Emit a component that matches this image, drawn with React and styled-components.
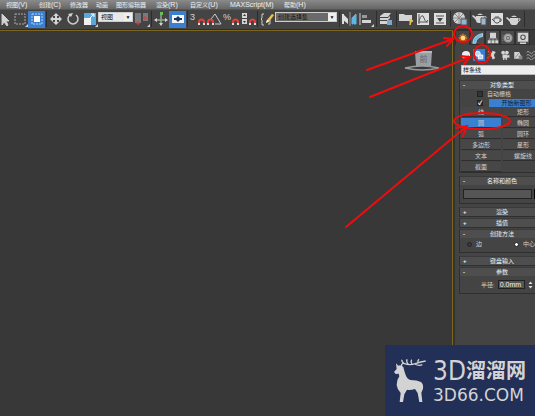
import React, { useState } from 'react';
import styled, { createGlobalStyle } from 'styled-components';

const menus = [
  ['视图', '(V)', 33],
  ['创建', '(C)', 31],
  ['修改器', '', 26],
  ['动画', '', 20],
  ['图形编辑器', '', 40],
  ['渲染', '(R)', 34],
  ['自定义', '(U)', 40],
  ['MAXScript', '(M)', 54],
  ['帮助', '(H)', 30],
];

const shapes = [
  '线', '矩形', '圆', '椭圆', '弧', '圆环',
  '多边形', '星形', '文本', '螺旋线', '截面',
];

const magnet = (
  <g fill='none' strokeWidth='2'>
    <path d='M10 12v-1a2.5 2.5 0 0 1 5 0v1' stroke='#d8453c' />
    <path d='M10 12v2M15 12v2' stroke='#ddd' />
  </g>
);

const teapot = (
  <g>
    <path d='M4 7h8q1 6-2 7H6Q3 13 4 7z' />
    <path d='M5 6q3-3 6 0zM4 11L0 7l1-1 4 3z' />
    <path d='M12 8q3-1 2 1t-3 2' fill='none' stroke='#d4d4d4' />
  </g>
);

const icons = {
  cursor: <path d='M7 3v11l2-3 3 4 1-1-2-4h3zM2 5l3 3M2 8l3 3' stroke='#ccc' />,
  region: (
    <g>
      <path d='M3 3h10v10H3z' fill='none' stroke='#aaa' strokeDasharray='2 1' />
      <path d='M16 13v3h-3z' />
    </g>
  ),
  crossing: (
    <g>
      <path d='M3 3h10v10H3z' fill='none' stroke='#b5d3f4' strokeDasharray='2 1' />
      <path d='M5 5h6v6H5z' fill='#fff' />
    </g>
  ),
  move: (
    <path d='M8 2l3 3H9v2h2V5l3 3-3 3V9H9v2h2l-3 3-3-3h2V9H5v2L2 8l3-3v2h2V5H5z' />
  ),
  rotate: (
    <g>
      <path d='M5 4a5 5 0 1 0 6 0' fill='none' stroke='#ccc' strokeWidth='1.5' />
      <path d='M3 3l5-1-2 4z' />
    </g>
  ),
  scale: (
    <g>
      <path d='M2 2h12v12H2z' fill='#5aa8da' />
      <path d='M2 7h7v7H2z' fill='#f1f1f1' />
      <path d='M7 8l5-5M9 3h3v3' fill='none' stroke='#fff' />
      <path d='M16 13v3h-3z' />
    </g>
  ),
  pivot: (
    <g>
      <path d='M1 2h6v10H1zM9 2h5v8H9z' fill='#777b80' />
      <path d='M2 12h4M4 10v4M9 7h4M11 5v4' stroke='#e23a31' />
      <path d='M16 13v3h-3z' />
    </g>
  ),
  manipulate: (
    <g>
      <path d='M8 2v12M2 9h12' stroke='#ccc' />
      <path d='M7 8h2v2H7zM7 1h3v3H7z' fill='#6cba62' />
      <path d='M4 7L1 9l3 2zM12 7l3 2-3 2zM6 12h4l-2 3z' />
    </g>
  ),
  keyboard: (
    <g>
      <path d='M2 4h12v8H2z' fill='#f4f4f4' />
      <path d='M8 5l2 2h2v2h-2l-2 2-2-2H4V7h2z' fill='#163766' />
    </g>
  ),
  snap: (
    <g>
      <text x='1' y='9' fontSize='9'>3</text>
      {magnet}
    </g>
  ),
  angle: (
    <g>
      <path d='M5 8l4-5 6 10H9' fill='none' stroke='#ccc' />
      <path d='M2 12v-1a2.5 2.5 0 0 1 5 0v1' fill='none' stroke='#d8453c' strokeWidth='2' />
      <path d='M2 12v2M7 12v2' stroke='#ddd' strokeWidth='2' />
    </g>
  ),
  percent: (
    <g>
      <text x='0' y='9' fontSize='9'>%</text>
      {magnet}
    </g>
  ),
  spinner: (
    <g>
      <path d='M2 2h5v5H2zM2 8h5v5H2z' />
      <path d='M3 5l1.5-2L6 5zM3 10l1.5 2L6 10z' fill='#333' />
      {magnet}
    </g>
  ),
  sets: (
    <g>
      <path d='M5 3H3v4L2 8l1 1v5h2M9 13h2V9' fill='none' stroke='#ccc' />
      <path d='M7 12l1-3 5-6 2 1-5 7z' fill='#e8c35a' />
      <path d='M7 12l1-3 2 1z' fill='#fff' />
    </g>
  ),
  mirror: (
    <g>
      <path d='M2 3l5 5v5L2 9z' fill='#ddd' />
      <path d='M2 3v10' stroke='#ddd' strokeWidth='2' />
      <path d='M15 3l-4 4v6h1l1-4v4h2z' fill='#60b7e6' stroke='#60b7e6' />
      <path d='M9 1v14' stroke='#999' />
    </g>
  ),
  align: (
    <g>
      <path d='M2 2v12' stroke='#ccc' />
      <path d='M4 4h5v3H4z' fill='#999' />
      <path d='M4 9h9v3H4z' />
      <path d='M16 13v3h-3z' />
    </g>
  ),
  layers: (
    <g>
      <path d='M2 5l4-3h7l-3 4H2zM2 7h8l2-2v2l-2 2H2zM2 10h7v3H2z' />
      <path d='M9 9h5v5H9z' fill='#82a5c6' />
    </g>
  ),
  ribbon: (
    <g>
      <path d='M1 3h5l1 1h7v6H1z' />
      <path d='M12 14V8l3 2-2 1z' fill='#e8c35a' stroke='#e8c35a' />
    </g>
  ),
  curve: (
    <g>
      <path d='M2 2h12v12H2z' fill='#ddd' />
      <path d='M4 3v10M3 11h10M4 10q3-9 5-3t4 2' fill='none' stroke='#555' />
    </g>
  ),
  schematic: (
    <g>
      <path d='M2 2h12v12H2z' fill='#ddd' />
      <path d='M4 5h8M4 12h8' stroke='#555' />
      <path d='M5 7h6l-3 4z' fill='#444' />
    </g>
  ),
  material: (
    <g>
      <circle cx='7' cy='7' r='6' />
      <path d='M3 3l8 8M11 3l-8 8M7 1v12M1 7h12' stroke='#888' />
      <path d='M9 8h6v6H9z' fill='#8eb5da' stroke='#555' />
    </g>
  ),
  renderSetup: (
    <g>
      <g transform='translate(0 -2)'>{teapot}</g>
      <path d='M9 7h5v7H9z' fill='#9db8d2' stroke='#555' />
    </g>
  ),
  renderFrame: (
    <g>
      <path d='M2 2h12v12H2z' fill='#ddd' />
      <path d='M5 7h6q1 4-2 5H7Q4 11 5 7zM5 10L3 8M11 8q3 0 0 3M6 6h4' fill='none' stroke='#555' />
    </g>
  ),
  teapot,
  create: (
    <g>
      <circle cx='8' cy='8' r='5' fill='#b45f1b' />
      <path d='M8 2v12M2 8h12M4 4l8 8M12 4l-8 8' stroke='#e58b2c' />
      <circle cx='8' cy='8' r='3' fill='#ffdb83' />
    </g>
  ),
  modify: <path d='M1 15Q2 4 14 2v4Q6 7 5 15z' fill='#69b6e8' stroke='#c5e4f6' />,
  hierarchy: (
    <g>
      <path d='M4 1h8v7H4zM1 11h4v4H1zM6 11h4v4H6zM11 11h4v4h-4z' />
      <path d='M8 7v4M3 11V9h10v2' fill='none' stroke='#aaa' />
    </g>
  ),
  motion: (
    <g>
      <circle cx='8' cy='8' r='6' fill='#999' />
      <circle cx='8' cy='8' r='3.5' fill='#555' stroke='#ccc' />
      <path d='M8 6v4M6 8h4' stroke='#ddd' />
      <path d='M0 5h2M0 8h2M0 11h2' stroke='#888' />
    </g>
  ),
  display: (
    <g>
      <path d='M1 1h14v12H1zM4 14h8v2H4z' />
      <circle cx='8' cy='7' r='3' fill='none' stroke='#555' strokeWidth='1.5' />
    </g>
  ),
  geometry: (
    <g>
      <circle cx='8' cy='8' r='6.5' fill='#eee' />
      <path d='M3 11q5 2 9-3l2 3q-4 6-11 0z' fill='#888' />
    </g>
  ),
  shapes: (
    <g fill='#b9d7f2' stroke='#fff' strokeWidth='1.5'>
      <circle cx='6' cy='6' r='4' />
      <path d='M7 8h7v6H7z' />
    </g>
  ),
  light: (
    <g>
      <path d='M9 1l5 2-3 5 2 5-4 2-2-5-5-3 5-2z' />
      <path d='M2 2l4 3M1 13l5-4' stroke='#e5b54c' strokeWidth='2' />
    </g>
  ),
  camera: (
    <g>
      <circle cx='5' cy='4' r='3' />
      <circle cx='11' cy='4' r='3' />
      <path d='M4 7h8v6H4zM12 9l3-2v6l-3-2zM5 13h2v3H5zM9 13h2v3H9z' />
    </g>
  ),
  helper: (
    <g>
      <path d='M2 3h8l3 7v4H2z' />
      <path d='M4 12L9 5' stroke='#666' />
      <path d='M9 9h6v6H9z' fill='#888' />
    </g>
  ),
  warp: (
    <path
      d='M1 4q2-4 5 0t5 0 4 0M1 9q2-4 5 0t5 0 4 0M1 14q2-4 5 0t5 0 4 0'
      fill='none'
      stroke='#aaa'
      strokeWidth='1.5'
    />
  ),
};

function Icon({ name, size = 16 }) {
  return (
    <svg width={size} height={size} viewBox='0 0 16 16' fill='#d4d4d4' aria-hidden='true'>
      {icons[name]}
    </svg>
  );
}

function Tools({ names, active }) {
  return names.map((name) => (
    <Tool key={name} aria-label={name} $active={name === active}>
      <Icon name={name} />
    </Tool>
  ));
}

function Rollout({ title, open, children }) {
  return (
    <Section $open={open}>
      <SectionTitle>
        <Sign>{open ? '-' : '+'}</Sign>
        {title}
      </SectionTitle>
      {children}
    </Section>
  );
}

function CommandPanel() {
  const [shape, setShape] = useState('圆');

  return (
    <Panel>
      <PanelTabs>
        {['create', 'modify', 'hierarchy', 'motion', 'display'].map((name) => (
          <PanelTab key={name} aria-label={name} $active={name === 'create'}>
            <Icon name={name} size={12} />
          </PanelTab>
        ))}
      </PanelTabs>
      <Categories>
        {['geometry', 'shapes', 'light', 'camera', 'helper', 'warp'].map((name) => (
          <Category key={name} aria-label={name} $active={name === 'shapes'}>
            <Icon name={name} size={10} />
          </Category>
        ))}
      </Categories>
      <SplineSelect aria-label='类别'>
        <option>样条线</option>
      </SplineSelect>

      <Rollouts>
        <Rollout title='对象类型' open>
          <Options>
            <Check>
              <input type='checkbox' />
              自动栅格
            </Check>
            <Check $filled>
              <input type='checkbox' defaultChecked />
              <span>开始新图形</span>
            </Check>
          </Options>
          <ShapeGrid>
            {shapes.map((name) => (
              <ShapeButton key={name} $active={name === shape} onClick={() => setShape(name)}>
                {name}
              </ShapeButton>
            ))}
          </ShapeGrid>
        </Rollout>
        <Rollout title='名称和颜色' open>
          <NameRow>
            <NameInput aria-label='名称' />
            <Swatch aria-label='颜色' />
          </NameRow>
        </Rollout>
        <Rollout title='渲染' />
        <Rollout title='插值' />
        <Rollout title='创建方法' open>
          <Radios>
            <label>
              <input type='radio' name='method' />边
            </label>
            <label>
              <input type='radio' name='method' defaultChecked />
              中心
            </label>
          </Radios>
        </Rollout>
        <Rollout title='键盘输入' />
        <Rollout title='参数' open>
          <Radius>
            <label htmlFor='radius'>半径:</label>
            <RadiusInput id='radius' defaultValue='0.0mm' />
            <svg width='5' height='8' viewBox='0 0 10 16' fill='#ddd' aria-hidden='true'>
              <path d='M1 6l4-5 4 5zM1 10h8l-4 5z' />
            </svg>
          </Radius>
        </Rollout>
      </Rollouts>
    </Panel>
  );
}

function App() {
  return (
    <Window>
      <GlobalStyle />
      <MenuBar>
        {menus.map(([name, key, width]) => (
          <MenuItem key={name} $width={width} $latin={name === 'MAXScript'}>
            {name}
            <span>{key}</span>
          </MenuItem>
        ))}
      </MenuBar>
      <Toolbar>
        <Tools names={['cursor', 'region', 'crossing']} active='crossing' />
        <Separator />
        <Tools names={['move', 'rotate', 'scale']} />
        <SelectBox $width={35}>
          <select aria-label='坐标系'>
            <option>视图</option>
          </select>
        </SelectBox>
        <Tools names={['pivot']} />
        <Separator />
        <Tools names={['manipulate', 'keyboard']} active='keyboard' />
        <Separator />
        <Tools names={['snap', 'angle', 'percent', 'spinner']} />
        <Separator />
        <Tools names={['sets']} />
        <SelectBox $width={62} $dark>
          <select aria-label='选择集'>
            <option>创建选择集</option>
          </select>
        </SelectBox>
        <Separator $wide />
        <Tools names={['mirror', 'align']} />
        <Separator $wide />
        <Tools names={['layers']} />
        <Separator $wide />
        <Tools names={['ribbon', 'curve', 'schematic']} />
        <Separator $wide />
        <Tools names={['material']} />
        <Separator $wide />
        <Tools names={['renderSetup', 'renderFrame', 'teapot']} />
        <Separator $wide />
      </Toolbar>
      <Workspace>
        <Viewport>
          <ViewCube width='36' height='22' viewBox='0 0 36 22'>
            <path d='M1 18q17 4 34 0-17-4-34 0z' fill='none' stroke='#999' strokeWidth='1.5' />
            <path d='M11 1h17l-1 15H12z' fill='#9a9fa5' />
            <path d='M11 1h17v2H11z' fill='#b4b8bd' />
            <text x='19.5' y='12' textAnchor='middle' fontSize='8' fill='#5c636c'>
              前
            </text>
          </ViewCube>
        </Viewport>
        <CommandPanel />
      </Workspace>

      <Annotations width='200' height='240' viewBox='335 0 200 240'>
        <path d='M367 70L453 39M444 38l9 1-6 7' />
        <path d='M370 97L470 57M461 56l9 1-6 7' />
        <path d='M346 227L467 126M456 128l11-2-4 10' />
        <ellipse cx='463' cy='34' rx='9' ry='8' />
        <ellipse cx='482' cy='54' rx='8' ry='9' />
        <ellipse cx='482' cy='121' rx='28' ry='8' />
      </Annotations>

      <Brand>
        <svg width='33' height='46' viewBox='0 0 99 138' fill='#d3d3d3' aria-hidden='true'>
          <path d='M6 16l7 7q8-3 15 4 3 14 7 24 4 12 14 15 20 0 32 6 8 6 6 20l-5 12 3 28h-9l-5-27-8-12q-14 4-24 2l-8 14-4 23h-10l3-27q-11-12-12-24-1-14 8-26l-2-8-9 1-5-6 8-9z' />
          <path
            d='M22 24Q23 14 32 17q15 6 32 0t31-8M30 16Q22 11 24 5M43 18Q36 12 39 4M54 19Q49 12 53 5M63 18q11 7 22 2M72 14q-2-6 3-10'
            fill='none'
            stroke='#d3d3d3'
            strokeWidth='4'
          />
        </svg>
        <BrandText>
          <BrandName>
            <span>3D</span>溜溜网
          </BrandName>
          <BrandSite>3D66.COM</BrandSite>
        </BrandText>
      </Brand>
    </Window>
  );
}

export default App;

const GlobalStyle = createGlobalStyle`
  * {
    box-sizing: border-box;
  }

  body {
    margin: 0;
    background: #383838;
  }

  body, button, input, select {
    font-family: 'Liberation Sans', 'Noto Sans CJK SC', sans-serif;
    font-size: 6px;
    line-height: 8px;
    color: #d0d0d0;
  }

  button {
    padding: 0;
    border: 0;
    background: none;
  }

  svg {
    display: block;
    flex: none;
  }
`;

const Window = styled.div`
  position: relative;
  display: flex;
  flex-direction: column;
  height: 100vh;
  overflow: hidden;
`;

const MenuBar = styled.nav`
  display: flex;
  flex: none;
  height: 9px;
  padding-left: 6px;
  background: linear-gradient(#8a8a8a, #666);
`;

const MenuItem = styled.button`
  flex: none;
  width: ${({ $width }) => $width}px;
  color: #f0f0f0;
  font-size: ${({ $latin }) => ($latin ? 7 : 6)}px;
  text-align: left;
  white-space: nowrap;

  span {
    font-size: 7px;
  }
`;

const Toolbar = styled.div`
  display: flex;
  flex: none;
  align-items: center;
  height: 21px;
  padding-bottom: 1px;
  background: #444;
  border-top: 1px solid #555;
  border-bottom: 1px solid #2e2e2e;
`;

const Tool = styled.button`
  display: flex;
  flex: none;
  align-items: center;
  justify-content: center;
  width: 17px;
  height: 17px;
  background: ${({ $active }) => ($active ? '#3b7fd0' : 'none')};

  &:first-child {
    margin-left: -6px;
  }
`;

const Separator = styled.div`
  flex: none;
  width: ${({ $wide }) => ($wide ? 3 : 2)}px;
  height: 16px;
  border-right: 1px solid #2c2c2c;
`;

const SelectBox = styled.div`
  position: relative;
  flex: none;
  width: ${({ $width }) => $width}px;
  height: 10px;
  margin-bottom: 4px;

  select {
    display: block;
    width: 100%;
    height: 100%;
    padding: 0 2px;
    appearance: none;
    border: 1px solid #ccc;
    border-radius: 0;
    background: ${({ $dark }) => ($dark ? '#6a6a6a' : '#e8e8e8')};
    color: #111;
  }

  &::after {
    content: '▼';
    position: absolute;
    top: 1px;
    right: 1px;
    width: 8px;
    height: 8px;
    background: #eee;
    color: #111;
    font-size: 5px;
    text-align: center;
    pointer-events: none;
  }
`;

const Workspace = styled.div`
  display: grid;
  grid-template-columns: 1fr 82px;
  flex: 1;
  min-height: 0;
`;

const Viewport = styled.main`
  position: relative;
  background: #383838;
  border-top: 1px solid #7d6622;
  border-right: 1px solid #7d6622;
`;

const ViewCube = styled.svg`
  position: absolute;
  top: 19px;
  right: 12px;
`;

const Panel = styled.aside`
  overflow: hidden;
  background: #444;
  border-left: 2px solid #333;
`;

const PanelTabs = styled.div`
  display: flex;
  height: 15px;
  background: #3a3a3a;
`;

const PanelTab = styled.button`
  display: flex;
  flex: none;
  align-items: center;
  justify-content: center;
  width: 15px;
  background: ${({ $active }) => ($active ? '#444' : '#4b4b4b')};
  border: 1px solid #303030;
  border-bottom-width: ${({ $active }) => ($active ? 0 : 1)}px;
`;

const Categories = styled.div`
  display: flex;
  padding: 4px 5px;
`;

const Category = styled.button`
  display: flex;
  flex: none;
  align-items: center;
  justify-content: center;
  width: 12px;
  height: 12px;
  margin-right: 1px;
  background: ${({ $active }) => ($active ? '#3b7fd0' : 'none')};
`;

const SplineSelect = styled.select`
  display: block;
  width: 90px;
  height: 10px;
  margin-left: 6px;
  padding: 0 1px;
  appearance: none;
  border: 1px solid #bbb;
  border-radius: 0;
  background: #eee;
  color: #111;
`;

/* wider than the panel, the right edge is clipped */
const Rollouts = styled.div`
  display: flex;
  flex-direction: column;
  width: 86px;
  margin: 5px 0 0 4px;
`;

const Section = styled.section`
  margin-bottom: ${({ $open }) => ($open ? 3 : 1)}px;
  border: 1px solid #2f2f2f;
  border-top-color: #3a3a3a;
`;

const SectionTitle = styled.h2`
  position: relative;
  margin: 0;
  background: #4e4e4e;
  color: #f0f0f0;
  font-size: 6px;
  font-weight: 400;
  text-align: center;
`;

const Sign = styled.span`
  position: absolute;
  left: 3px;
  font-weight: 700;
`;

const Options = styled.div`
  display: grid;
  gap: 1px;
  padding: 1px 0 0 17px;
`;

const Check = styled.label`
  display: flex;
  align-items: center;
  gap: ${({ $filled }) => ($filled ? 6 : 4)}px;
  height: 8px;

  input {
    width: 6px;
    height: 6px;
    margin: 0;
    appearance: none;
    background: #333;
    border: 1px solid #222;
  }

  input:checked::after {
    content: '✓';
    display: block;
    color: #fff;
    font-weight: 700;
    line-height: 4px;
  }

  span {
    flex: 1;
    background: #3b7fd0;
    color: #0b1c33;
    text-align: center;
  }
`;

const ShapeGrid = styled.div`
  display: grid;
  grid-template-columns: 1fr 1fr;
  grid-auto-rows: 10px;
  gap: 1px 2px;
  padding: 0 1px;
`;

const ShapeButton = styled.button`
  background: ${({ $active }) => ($active ? '#3b7fd0' : '#474747')};
  border-bottom: 1px solid #2f2f2f;
`;

const NameRow = styled.div`
  display: flex;
  gap: 2px;
  padding: 4px 3px;
`;

const NameInput = styled.input`
  width: 69px;
  height: 10px;
  padding: 0 2px;
  background: #555;
  border: 1px solid #222;
`;

const Swatch = styled.button`
  width: 9px;
  height: 10px;
  background: #000;
`;

const Radios = styled.div`
  display: flex;
  gap: 32px;
  padding: 2px 0 4px 7px;

  label {
    display: flex;
    align-items: center;
    gap: 4px;
  }

  input {
    width: 5px;
    height: 5px;
    margin: 0;
    appearance: none;
    border: 1px solid #222;
    border-radius: 50%;
    background: #3a3a3a;
  }

  input:checked {
    background: #fff;
  }
`;

const Radius = styled.div`
  display: flex;
  align-items: center;
  gap: 3px;
  padding: 4px 0 4px 21px;
`;

const RadiusInput = styled.input`
  width: 27px;
  height: 9px;
  padding: 0 1px;
  background: #555;
  border: 1px solid #222;
  color: #eee;
  font-size: 7px;
`;

const Annotations = styled.svg`
  position: absolute;
  top: 0;
  right: 0;
  fill: none;
  stroke: #f00c0c;
  stroke-width: 2;
  stroke-linecap: round;
  pointer-events: none;
`;

const Brand = styled.footer`
  position: absolute;
  right: 0;
  bottom: 0;
  display: flex;
  align-items: center;
  gap: 6px;
  width: 150px;
  height: 71px;
  padding-left: 9px;
  background: #222f56;
`;

const BrandText = styled.div`
  color: #d3d3d3;
  white-space: nowrap;
`;

const BrandName = styled.div`
  display: flex;
  align-items: center;
  height: 28px;
  font-size: 20px;
  font-weight: 700;
  line-height: 28px;

  span {
    font-family: 'DejaVu Sans Condensed', 'DejaVu Sans', sans-serif;
    font-size: 26px;
    font-weight: 400;
  }
`;

const BrandSite = styled.div`
  font-family: 'DejaVu Sans', sans-serif;
  font-size: 17px;
  line-height: 20px;
`;
